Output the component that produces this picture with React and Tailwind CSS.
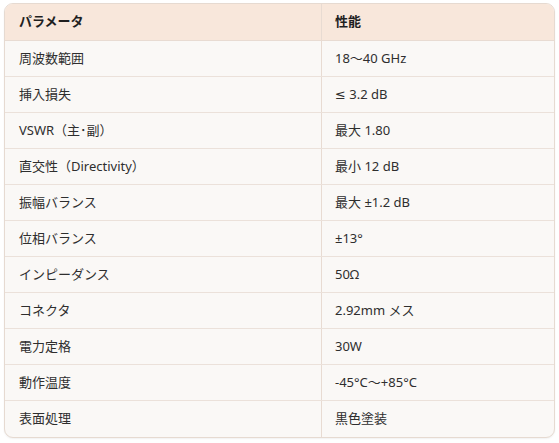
import React from "react";

const rows = [
  ["周波数範囲", "18～40 GHz"],
  ["挿入損失", "≤ 3.2 dB"],
  ["VSWR（主･副）", "最大 1.80"],
  ["直交性（Directivity）", "最小 12 dB"],
  ["振幅バランス", "最大 ±1.2 dB"],
  ["位相バランス", "±13°"],
  ["インピーダンス", "50Ω"],
  ["コネクタ", "2.92mm メス"],
  ["電力定格", "30W"],
  ["動作温度", "-45°C～+85°C"],
  ["表面処理", "黒色塗装"],
];

export default function App() {
  return (
    <div
      className="w-[559px] h-[443px] bg-white pt-[3px] pl-[4px]"
      style={{ fontFamily: '"Noto Sans", "DejaVu Sans", "Noto Sans CJK JP", sans-serif' }}
    >
      <div className="w-[551px] border border-[#e6dad1] rounded-[9px] overflow-hidden bg-[#faf8f6] shadow-[0_1px_2px_rgba(0,0,0,0.06)]">
        <div className="grid grid-cols-[317px_1fr] h-[37px] bg-[#f8e7db] border-b border-[#e8dbd2] text-[13px] font-bold text-[#1f1f1f]">
          <div className="flex items-center pl-[14px] border-r border-[#e8dbd2]">パラメータ</div>
          <div className="flex items-center pl-[13px]">性能</div>
        </div>
        {rows.map(([a, b], i) => (
          <div
            key={i}
            className={
              "grid grid-cols-[317px_1fr] h-[36px] text-[13px] text-[#2e2e2e] " +
              (i < rows.length - 1 ? "border-b border-[#ebe1da]" : "")
            }
          >
            <div className="flex items-center pl-[14px] border-r border-[#e8dbd2]">{a}</div>
            <div className="flex items-center pl-[13px]">{b}</div>
          </div>
        ))}
      </div>
    </div>
  );
}
